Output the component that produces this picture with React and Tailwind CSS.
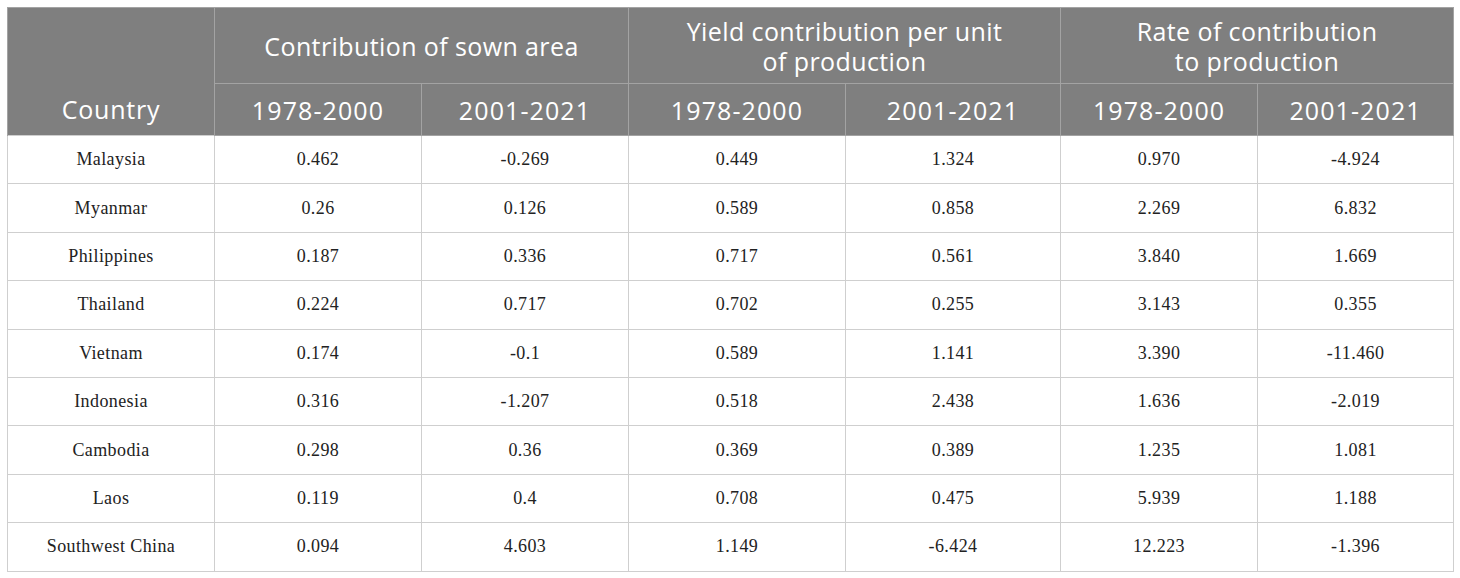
import React from "react";

const rows = [
  ["Malaysia", "0.462", "-0.269", "0.449", "1.324", "0.970", "-4.924"],
  ["Myanmar", "0.26", "0.126", "0.589", "0.858", "2.269", "6.832"],
  ["Philippines", "0.187", "0.336", "0.717", "0.561", "3.840", "1.669"],
  ["Thailand", "0.224", "0.717", "0.702", "0.255", "3.143", "0.355"],
  ["Vietnam", "0.174", "-0.1", "0.589", "1.141", "3.390", "-11.460"],
  ["Indonesia", "0.316", "-1.207", "0.518", "2.438", "1.636", "-2.019"],
  ["Cambodia", "0.298", "0.36", "0.369", "0.389", "1.235", "1.081"],
  ["Laos", "0.119", "0.4", "0.708", "0.475", "5.939", "1.188"],
  ["Southwest China", "0.094", "4.603", "1.149", "-6.424", "12.223", "-1.396"],
];

const head = "border border-[#a3a3a3] text-white font-normal text-center leading-[30px]";
const years = ["1978-2000", "2001-2021", "1978-2000", "2001-2021", "1978-2000", "2001-2021"];

export default function App() {
  return (
    <div className="w-[1460px] h-[578px] bg-white p-[7px]">
      <table className="table-fixed border-collapse w-[1446px]">
        <colgroup>
          <col className="w-[207px]" />
          <col className="w-[207px]" />
          <col className="w-[207px]" />
          <col className="w-[217px]" />
          <col className="w-[215px]" />
          <col className="w-[197px]" />
          <col className="w-[196px]" />
        </colgroup>
        <thead className="bg-[#7f7f7f] font-['Open_Sans',sans-serif] text-[25px] tracking-[0.4px]">
          <tr className="h-[76px]">
            <th rowSpan={2} className={head + " align-bottom pb-[11px] border-b-0 tracking-[0.8px]"}>Country</th>
            <th colSpan={2} className={head}>Contribution of sown area</th>
            <th colSpan={2} className={head}>Yield contribution per unit<br />of production</th>
            <th colSpan={2} className={head}>Rate of contribution<br />to production</th>
          </tr>
          <tr className="h-[52px]">
            {years.map((y, i) => (
              <th key={i} className={head + " tracking-[1.1px]"}>{y}</th>
            ))}
          </tr>
        </thead>
        <tbody className="font-['Liberation_Serif',serif] text-[18px] tracking-[0.4px] text-[#222]">
          {rows.map((r) => (
            <tr key={r[0]} className="h-[48.4px]">
              {r.map((c, i) => (
                <td key={i} className="border border-[#cfcfcf] text-center">{c}</td>
              ))}
            </tr>
          ))}
        </tbody>
      </table>
    </div>
  );
}
